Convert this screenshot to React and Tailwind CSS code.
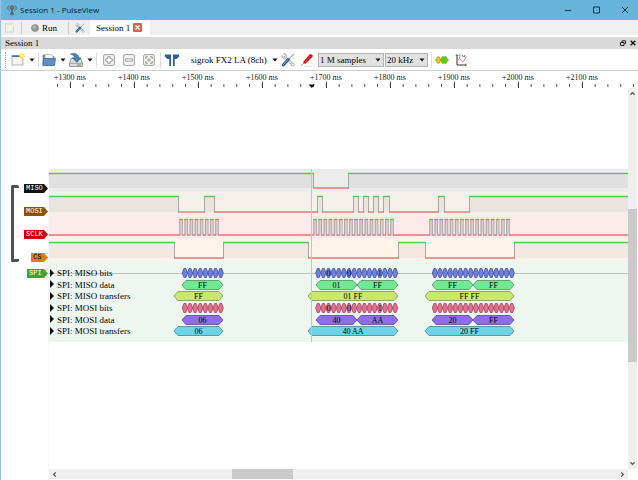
const HIGH = 4;
const PX_PER_BIT = 5.125;

const pulses = (start, count) =>
  Array.from({ length: count }, (_, i) => [
    start + i * PX_PER_BIT,
    start + i * PX_PER_BIT + 2.6,
  ]);

// "high" holds the [from, to] spans where the signal is 1
const channels = [
  {
    name: "MISO",
    low: 19,
    tag: "w-6 bg-[#101414] text-white",
    band: "bg-[#ececec]",
    fill: "#e0e0e0",
    high: [[-5, 264], [299, 3000]],
  },
  {
    name: "MOSI",
    low: 20,
    tag: "w-6 bg-[#8f5202] text-white",
    band: "bg-[#f5f0ea]",
    fill: "#e9e5de",
    high: [
      [-5, 129],
      [155, 165],
      [268, 273],
      [304, 309],
      [314, 319],
      [324, 329],
      [334, 340],
      [389, 395],
      [420, 3000],
    ],
  },
  {
    name: "SCLK",
    low: 20,
    tag: "w-6 bg-[#cc0000] text-white",
    band: "bg-[#fbeaea]",
    fill: "#dccfcf",
    high: [...pulses(130.3, 8), ...pulses(264.3, 16), ...pulses(380.3, 16)],
  },
  {
    name: "CS",
    low: 20,
    tag: "w-[17px] bg-[#f57900] text-black",
    band: "bg-[#fff3ea]",
    fill: "#f2e8df",
    high: [[-5, 125], [174, 259], [349, 376], [465, 3000]],
  },
];

const bitGroups = [
  [133.3, 8],
  [266.7, 16],
  [383.3, 16],
];

const bits = (labels) =>
  bitGroups.flatMap(([start, count], g) =>
    Array.from({ length: count }, (_, i) => ({
      from: start + i * PX_PER_BIT,
      to: start + (i + 1) * PX_PER_BIT,
      text: g === 1 ? labels[i] : undefined,
    }))
  );

const words = (a, b, c, d, e) => [
  { from: 133, to: 174, text: a },
  { from: 267, to: 308, text: b },
  { from: 308, to: 349, text: c },
  { from: 383, to: 424, text: d },
  { from: 424, to: 465, text: e },
];

const transfers = (a, b, c) => [
  { from: 125, to: 174, text: a },
  { from: 259, to: 349, text: b },
  { from: 376, to: 465, text: c },
];

const bitLabels = { 2: "0", 6: "0", 12: "1" };

const decoderRows = [
  { name: "SPI: MISO bits", fill: "#6d80e6", stroke: "#46508c", bevel: 1.6, items: bits(bitLabels) },
  { name: "SPI: MISO data", fill: "#72e896", stroke: "#4c9160", bevel: 4, items: words("FF", "01", "FF", "FF", "FF") },
  { name: "SPI: MISO transfers", fill: "#cbe86d", stroke: "#7f904a", bevel: 4, items: transfers("FF", "01 FF", "FF FF") },
  { name: "SPI: MOSI bits", fill: "#e86d8f", stroke: "#91485c", bevel: 1.6, items: bits(bitLabels) },
  { name: "SPI: MOSI data", fill: "#8f6de8", stroke: "#594791", bevel: 4, items: words("06", "40", "AA", "20", "FF") },
  { name: "SPI: MOSI transfers", fill: "#6dd4e8", stroke: "#478491", bevel: 4, items: transfers("06", "40 AA", "20 FF") },
];

function Wave({ high, low, fill }) {
  const lows = [];
  let prev = -5;
  high.forEach(([from, to]) => {
    if (from > prev) lows.push([prev, from]);
    prev = to;
  });
  if (prev < 3000) lows.push([prev, 3000]);

  return (
    <svg className="block h-full w-full" aria-hidden="true">
      {high.map(([from, to]) => (
        <g key={from}>
          <rect x={from} y={HIGH} width={to - from} height={low - HIGH} fill={fill} />
          <path d={`M${from + 0.5} ${HIGH}V${low + 1}M${to + 0.5} ${HIGH}V${low + 1}`} stroke="#a9a6a4" />
          <path d={`M${from} ${HIGH + 0.5}H${to + 1}`} stroke="#4fcc4f" strokeWidth="1.4" />
        </g>
      ))}
      {lows.map(([from, to]) => (
        <path key={from} d={`M${from + 0.5} ${low}H${to + 0.5}`} stroke="#e27777" strokeWidth="1.4" />
      ))}
    </svg>
  );
}

function Annotations({ items, fill, stroke, bevel }) {
  return (
    <svg className="absolute inset-0 h-full w-full" aria-hidden="true">
      {items.map(({ from, to }) => (
        <path
          key={from}
          d={`M${from} 6L${from + bevel} 1.5H${to - bevel}L${to} 6L${to - bevel} 10.5H${from + bevel}Z`}
          fill={fill}
          stroke={stroke}
          strokeWidth="0.8"
        />
      ))}
      {items
        .filter((item) => item.text)
        .map(({ from, to, text }) => (
          <text key={from} x={(from + to) / 2} y="9" textAnchor="middle" className="text-[8px]">
            {text}
          </text>
        ))}
    </svg>
  );
}

function Ruler() {
  const majors = Array.from({ length: 9 }, (_, i) => i);
  const minors = Array.from({ length: 46 }, (_, i) => 8.5 + i * 12.8);
  return (
    <svg className="ml-12 block h-4 flex-1" aria-label="Time ruler">
      {minors.map((x) => (
        <path key={x} d={`M${x} 12V15`} stroke="#555" />
      ))}
      {majors.map((i) => (
        <g key={i}>
          <path d={`M${21.5 + i * 64} 10V16`} stroke="#444" />
          <text x={21 + i * 64} y="8" textAnchor="middle" className="fill-[#222] text-[8px]">
            +{1300 + i * 100} ms
          </text>
        </g>
      ))}
      <path d="M259.5 12.5h6.5l-3.25 3.5z" fill="#111" />
    </svg>
  );
}

const Arrow = () => (
  <svg className="h-1 w-1.5 shrink-0" viewBox="0 0 6 4" aria-hidden="true">
    <path d="M0.5 0.5h5L3 3.5z" fill="#111" />
  </svg>
);

const Separator = () => <span className="h-4 w-px shrink-0 bg-[#dcdcdc]" />;

function Tools({ className }) {
  return (
    <svg className={className} viewBox="0 0 14 14" aria-hidden="true">
      <path d="M4 4l7.5 7.5" stroke="#98a0a6" strokeWidth="2.4" strokeLinecap="round" />
      <path d="M4 4l7.5 7.5" stroke="#e4e8ea" strokeWidth="1.2" strokeLinecap="round" />
      <path d="M1 2.3l2 2 1.4-1.4-2-2C4-.1 6.2 1 5.7 3.6 5 6 2.6 6.2 1.5 4.9.8 4 .6 3 1 2.3z" fill="#e1e4e6" stroke="#8f989e" strokeWidth=".6" />
      <circle cx="11.6" cy="11.6" r="1.5" fill="#eceeef" stroke="#8f989e" strokeWidth=".6" />
      <path d="M12.8 1L7 7.2" stroke="#a5b1bd" strokeWidth="1.3" />
      <path d="M7.2 6.6l-4.9 5.3" stroke="#2c5a9c" strokeWidth="3" strokeLinecap="round" />
      <path d="M6.6 6.9l-4.2 4.6" stroke="#7fa6dc" strokeWidth="1" strokeLinecap="round" />
    </svg>
  );
}

const NewIcon = () => (
  <svg className="size-3.5" viewBox="0 0 14 14" aria-hidden="true">
    <rect x="1" y="2.5" width="11" height="9.5" fill="#f5f5f4" stroke="#a3a3a0" strokeWidth=".8" />
    <path d="M1 3.2h9" stroke="#3f70ad" strokeWidth="1.6" />
    <circle cx="11" cy="3" r="2.7" fill="#f7e948" />
    <circle cx="11" cy="3" r="1.1" fill="#fffde0" />
  </svg>
);

const OpenIcon = () => (
  <svg className="size-3.5" viewBox="0 0 14 14" aria-hidden="true">
    <path d="M1 12V2h4.5l1 1.5H12V12z" fill="#8d9194" stroke="#5f6468" strokeWidth=".6" />
    <path d="M3 6V1.5h6.5l1.5 1.5v3z" fill="#f1f2f3" stroke="#92979a" strokeWidth=".5" />
    <path d="M1 12.5L1.5 5.5h12L12.5 12.5z" fill="#5f8fca" stroke="#345f9c" strokeWidth=".7" />
  </svg>
);

const SaveIcon = () => (
  <svg className="size-3.5" viewBox="0 0 14 14" aria-hidden="true">
    <path d="M2.5 5h9l2 5v3.5H.5V10z" fill="#dadcda" stroke="#747874" strokeWidth=".7" />
    <path d="M1 10.3h12" stroke="#858985" strokeWidth=".7" />
    <path d="M8 12h4" stroke="#73777a" />
    <path d="M1.5 1C5-.2 9.5.5 9.8 5h2.2L7.8 9.3 3.5 5h2.4C5.8 3 4 2 1.5 1z" fill="#4584b8" stroke="#225d8e" strokeWidth=".6" />
  </svg>
);

function ZoomIcon({ children }) {
  return (
    <svg className="size-3" viewBox="0 0 12 12" fill="none" stroke="#858585" aria-hidden="true">
      <rect x=".6" y=".6" width="10.8" height="10.8" rx="1.5" fill="#f3f3f2" stroke="#a0a09e" />
      {children}
    </svg>
  );
}

function Toolbar() {
  return (
    <div className="flex h-[22px] items-center gap-[3px] border-b border-[#cfcfcf] bg-white pl-1">
      <span className="h-4 w-[3px] border-l border-dotted border-[#aaa]" />
      <button aria-label="New session" className="flex w-6 items-center justify-between">
        <NewIcon />
        <Arrow />
      </button>
      <Separator />
      <button aria-label="Open" className="flex w-6 items-center justify-between">
        <OpenIcon />
        <Arrow />
      </button>
      <button aria-label="Save" className="flex w-6 items-center justify-between">
        <SaveIcon />
        <Arrow />
      </button>
      <Separator />
      <button aria-label="Zoom in" className="flex w-[17px] justify-center">
        <ZoomIcon>
          <path d="M4.8 2.7h2.4v2.1h2.1v2.4H7.2v2.1H4.8V7.2H2.7V4.8h2.1z" fill="#fff" strokeWidth=".8" />
        </ZoomIcon>
      </button>
      <button aria-label="Zoom out" className="flex w-[17px] justify-center">
        <ZoomIcon>
          <rect x="2.7" y="4.9" width="6.6" height="2.2" fill="#fff" strokeWidth=".8" />
        </ZoomIcon>
      </button>
      <button aria-label="Zoom to fit" className="flex w-[17px] justify-center">
        <ZoomIcon>
          <path d="M2.8 4.8v-2h2M7.2 2.8h2v2M9.2 7.2v2h-2M4.8 9.2h-2v-2" />
          <rect x="5" y="5" width="2" height="2" strokeWidth=".7" />
        </ZoomIcon>
      </button>
      <Separator />
      <button aria-label="Show cursors" className="w-4">
        <svg className="h-3.5 w-4" viewBox="0 0 16 14" aria-hidden="true">
          <path d="M1 1.5h6V13H5.3V6H3.5L1 3.8zM9 1.5h6v2.3L12.5 6h-1.8v7H9z" fill="#2c5d9f" />
        </svg>
      </button>
      <button className="flex w-[95px] items-center justify-between pl-2 whitespace-nowrap">
        sigrok FX2 LA (8ch)
        <Arrow />
      </button>
      <button aria-label="Configure device">
        <Tools className="size-3.5" />
      </button>
      <button aria-label="Configure channels" className="flex w-[17px] justify-center">
        <svg className="size-3.5" viewBox="0 0 14 14" aria-hidden="true">
          <path d="M4 13.2h8" stroke="#dcdcdc" />
          <path d="M1 12.8l4-4" stroke="#777" strokeWidth=".8" />
          <path d="M3 9.3L9.5 1.6C11 .4 13.6 2.2 12.4 4L5 11z" fill="#cf1010" />
          <path d="M5 9l5.5-6" stroke="#ee5252" strokeWidth=".7" />
        </svg>
      </button>
      <div className="flex gap-px">
        <Combo label="Sample count" value="1 M samples" width="w-[66px]" />
        <Combo label="Sample rate" value="20 kHz" width="w-[43px]" />
      </div>
      <Separator />
      <button aria-label="Add protocol decoder">
        <svg className="size-3.5" viewBox="0 0 14 14" aria-hidden="true">
          <path d="M0 7h14" stroke="#888" strokeWidth=".7" />
          <path d="M.8 7L2.5 3.8h2L5.8 7 4.5 10.2h-2z" fill="#e9c800" stroke="#a28a00" strokeWidth=".5" />
          <path d="M5.6 7L7.3 3.7h3.9L13 7l-1.8 3.3H7.3z" fill="#67cd12" stroke="#49960a" strokeWidth=".5" />
        </svg>
      </button>
      <button aria-label="Add math signal" className="flex w-[18px] justify-center">
        <svg className="size-3" viewBox="0 0 12 12" fill="none" aria-hidden="true">
          <path d="M2 1v10h9" stroke="#333" />
          <path d="M.8 2L2 .5 3.2 2M10 9.8l1.5 1.2L10 12M4 1h1.5M4 3h1.5M7 1l1.5 2M10 1l-1 2.2" stroke="#444" strokeWidth=".8" />
          <path d="M2 9C4 3 5 4 6.2 6.5S9 8 11 2.5" stroke="#ef7070" strokeWidth=".9" />
        </svg>
      </button>
    </div>
  );
}

function Combo({ label, value, width }) {
  return (
    <div className={`relative h-3.5 ${width}`}>
      <select
        aria-label={label}
        defaultValue={value}
        className="h-full w-full appearance-none border border-[#b4b4b4] bg-[#e1e1e1] pl-px text-[9px] leading-3"
      >
        <option>{value}</option>
      </select>
      <span className="pointer-events-none absolute inset-y-0 right-[3px] flex items-center">
        <Arrow />
      </span>
    </div>
  );
}

function TitleBar() {
  return (
    <header className="flex h-5 items-center bg-[#68b5dc] pl-1.5">
      <svg className="h-3 w-2.5" viewBox="0 0 10 12" fill="none" aria-hidden="true">
        <path d="M2 1.5C0 3.5.5 6 2.5 7M8 1.5c2 2 1.5 4.5-.5 5.5" stroke="#4a6d80" />
        <path d="M3 3.5C3 .8 7 .8 7 3.5V5H3z" fill="#8c6a5a" stroke="#654f48" strokeWidth=".6" />
        <path d="M5 5v5M3.5 11l1.5-3 1.5 3" stroke="#57504e" strokeWidth="1.2" />
      </svg>
      <h1 className="pl-[3px] font-['Open_Sans',sans-serif] text-[8px] text-[#0c181f]">
        Session 1 - PulseView
      </h1>
      <div className="ml-auto flex text-[#18303c]">
        <button aria-label="Minimize" className="flex w-[29px] justify-center">
          <svg className="size-2" viewBox="0 0 8 8" stroke="currentColor" aria-hidden="true">
            <path d="M1 4.5h6" />
          </svg>
        </button>
        <button aria-label="Maximize" className="flex w-[29px] justify-center">
          <svg className="size-2" viewBox="0 0 8 8" fill="none" stroke="currentColor" aria-hidden="true">
            <path d="M.5 1h6v6h-6z" />
          </svg>
        </button>
        <button aria-label="Close" className="flex w-[27px] justify-center">
          <svg className="size-2" viewBox="0 0 8 8" stroke="currentColor" aria-hidden="true">
            <path d="M1 1l6 6M7 1L1 7" />
          </svg>
        </button>
      </div>
    </header>
  );
}

function SessionTabs() {
  return (
    <nav className="flex h-[15px] items-center bg-[#efefef] pl-1">
      <button aria-label="New session tab" className="flex w-4">
        <svg className="size-2.5" viewBox="0 0 10 10" aria-hidden="true">
          <rect x=".5" y="1" width="8" height="8" fill="#f2f2ef" stroke="#d2d2ce" />
          <circle cx="8" cy="2.5" r="1.5" fill="#eeeeda" />
        </svg>
      </button>
      <span className="h-3 w-px bg-[#c9c9c9]" />
      <button className="flex w-[46px] items-center gap-[3px] pl-[9px]">
        <svg className="size-2" viewBox="0 0 8 8" aria-hidden="true">
          <circle cx="4" cy="4" r="3.5" fill="#949691" stroke="#858782" strokeWidth=".6" />
          <circle cx="3.2" cy="3" r="1.6" fill="#b8bab4" />
        </svg>
        Run
      </button>
      <span className="h-3 w-px bg-[#c9c9c9]" />
      <button aria-label="Settings" className="flex w-[21px] justify-center">
        <Tools className="size-2.5" />
      </button>
      <div className="flex h-full items-center gap-[3px] bg-white pr-2 pl-1.5">
        <button>Session 1</button>
        <button aria-label="Close session" className="flex">
          <svg className="size-[9px]" viewBox="0 0 9 9" aria-hidden="true">
            <rect width="9" height="9" rx="1" fill="#dc6246" />
            <path d="M2.5 2.5l4 4M6.5 2.5l-4 4" stroke="#fff" strokeWidth="1.4" />
          </svg>
        </button>
      </div>
    </nav>
  );
}

function DockTitle() {
  return (
    <div className="mt-0.5 flex h-3 items-center bg-[#d9d9d9] pl-1">
      <h2>Session 1</h2>
      <button aria-label="Float" className="ml-auto flex w-2.5 justify-center">
        <svg className="size-1.5" viewBox="0 0 6 6" fill="none" stroke="#111" aria-hidden="true">
          <path d="M2 2V.8h3.5v2.8H4.5M.5 2.5h3.5v3H.5z" strokeWidth=".9" />
        </svg>
      </button>
      <button aria-label="Close dock" className="flex w-2.5 justify-center">
        <svg className="size-1.5" viewBox="0 0 6 6" stroke="#111" aria-hidden="true">
          <path d="M.7.7l4.6 4.6M5.3.7L.7 5.3" strokeWidth="1.3" />
        </svg>
      </button>
    </div>
  );
}

const Chevron = ({ d }) => (
  <svg className="size-[5px]" viewBox="0 0 6 6" fill="none" stroke="#505050" strokeWidth="1.5" aria-hidden="true">
    <path d={d} />
  </svg>
);

const tagBase =
  "h-[9px] pl-0.5 font-['Liberation_Mono',monospace] text-[7px] leading-[9px] [clip-path:polygon(0_0,calc(100%_-_4px)_0,100%_50%,calc(100%_-_4px)_100%,0_100%)]";

function TraceHeader() {
  return (
    <div className="flex w-12 shrink-0 justify-between border-r border-[#f6f6f6] pt-24 pl-2.5">
      <div className="mt-px h-[77px] w-2 rounded-xs border-y-[3px] border-l-[3px] border-[#505050]" />
      <div className="flex flex-col items-end gap-[7px]">
        <div className="flex flex-col items-end gap-3.5">
          {channels.map((channel) => (
            <div key={channel.name} className={`${tagBase} ${channel.tag}`}>
              {channel.name}
            </div>
          ))}
        </div>
        <div className={`${tagBase} w-[21px] bg-[#33a833] text-white`}>SPI</div>
      </div>
    </div>
  );
}

function Traces() {
  return (
    <div className="min-w-0 flex-1 pt-[81px]">
      <div className="relative">
        {channels.map((channel) => (
          <div key={channel.name} className={`h-[23px] ${channel.band}`}>
            <Wave high={channel.high} low={channel.low} fill={channel.fill} />
          </div>
        ))}
        <div className="grid h-[81px] grid-rows-6 bg-[#eef7ef] pt-1.5 pb-[5px]">
          {decoderRows.map((row, i) => (
            <div key={row.name} className="relative flex items-center gap-[3px] pl-px">
              {i === 0 && <span className="absolute inset-x-0 top-1/2 h-px bg-[#bac2bb]" />}
              <Annotations {...row} />
              <svg className="relative h-2 w-1" viewBox="0 0 4 8" aria-hidden="true">
                <path d="M0 0l4 4-4 4z" fill="#111" />
              </svg>
              <span className="relative">{row.name}</span>
            </div>
          ))}
        </div>
        <span className="absolute inset-y-0 left-[262px] w-px bg-[#c4c4c4]" />
      </div>
    </div>
  );
}

export default function App() {
  return (
    <div className="flex min-h-screen flex-col border-l border-[#93c4de] bg-white font-['Liberation_Serif',serif] text-[9px] leading-3 text-black">
      <TitleBar />
      <SessionTabs />
      <DockTitle />
      <Toolbar />
      <main className="flex flex-1 flex-col pt-px pb-px">
        <div className="flex">
          <Ruler />
        </div>
        <div className="flex flex-1">
          <TraceHeader />
          <div className="flex min-w-0 flex-1 flex-col">
            <div className="flex flex-1">
              <Traces />
            </div>
            <div className="flex h-2.5 items-center bg-[#efefef] px-[3px]">
              <Chevron d="M4.5 0.5L2 3l2.5 2.5" />
              <div className="flex h-full flex-1">
                <span className="w-[31%]" />
                <span className="w-[11%] bg-[#cacaca]" />
              </div>
              <Chevron d="M1.5 0.5L4 3 1.5 5.5" />
            </div>
          </div>
          <div className="mr-px mb-2.5 flex w-[9px] flex-col items-center bg-[#efefef] py-[3px]">
            <Chevron d="M0.5 4.5L3 2l2.5 2.5" />
            <div className="flex w-full flex-1 flex-col">
              <span className="basis-[31%]" />
              <span className="basis-[42%] bg-[#cacaca]" />
            </div>
            <Chevron d="M0.5 1.5L3 4l2.5-2.5" />
          </div>
        </div>
      </main>
    </div>
  );
}
